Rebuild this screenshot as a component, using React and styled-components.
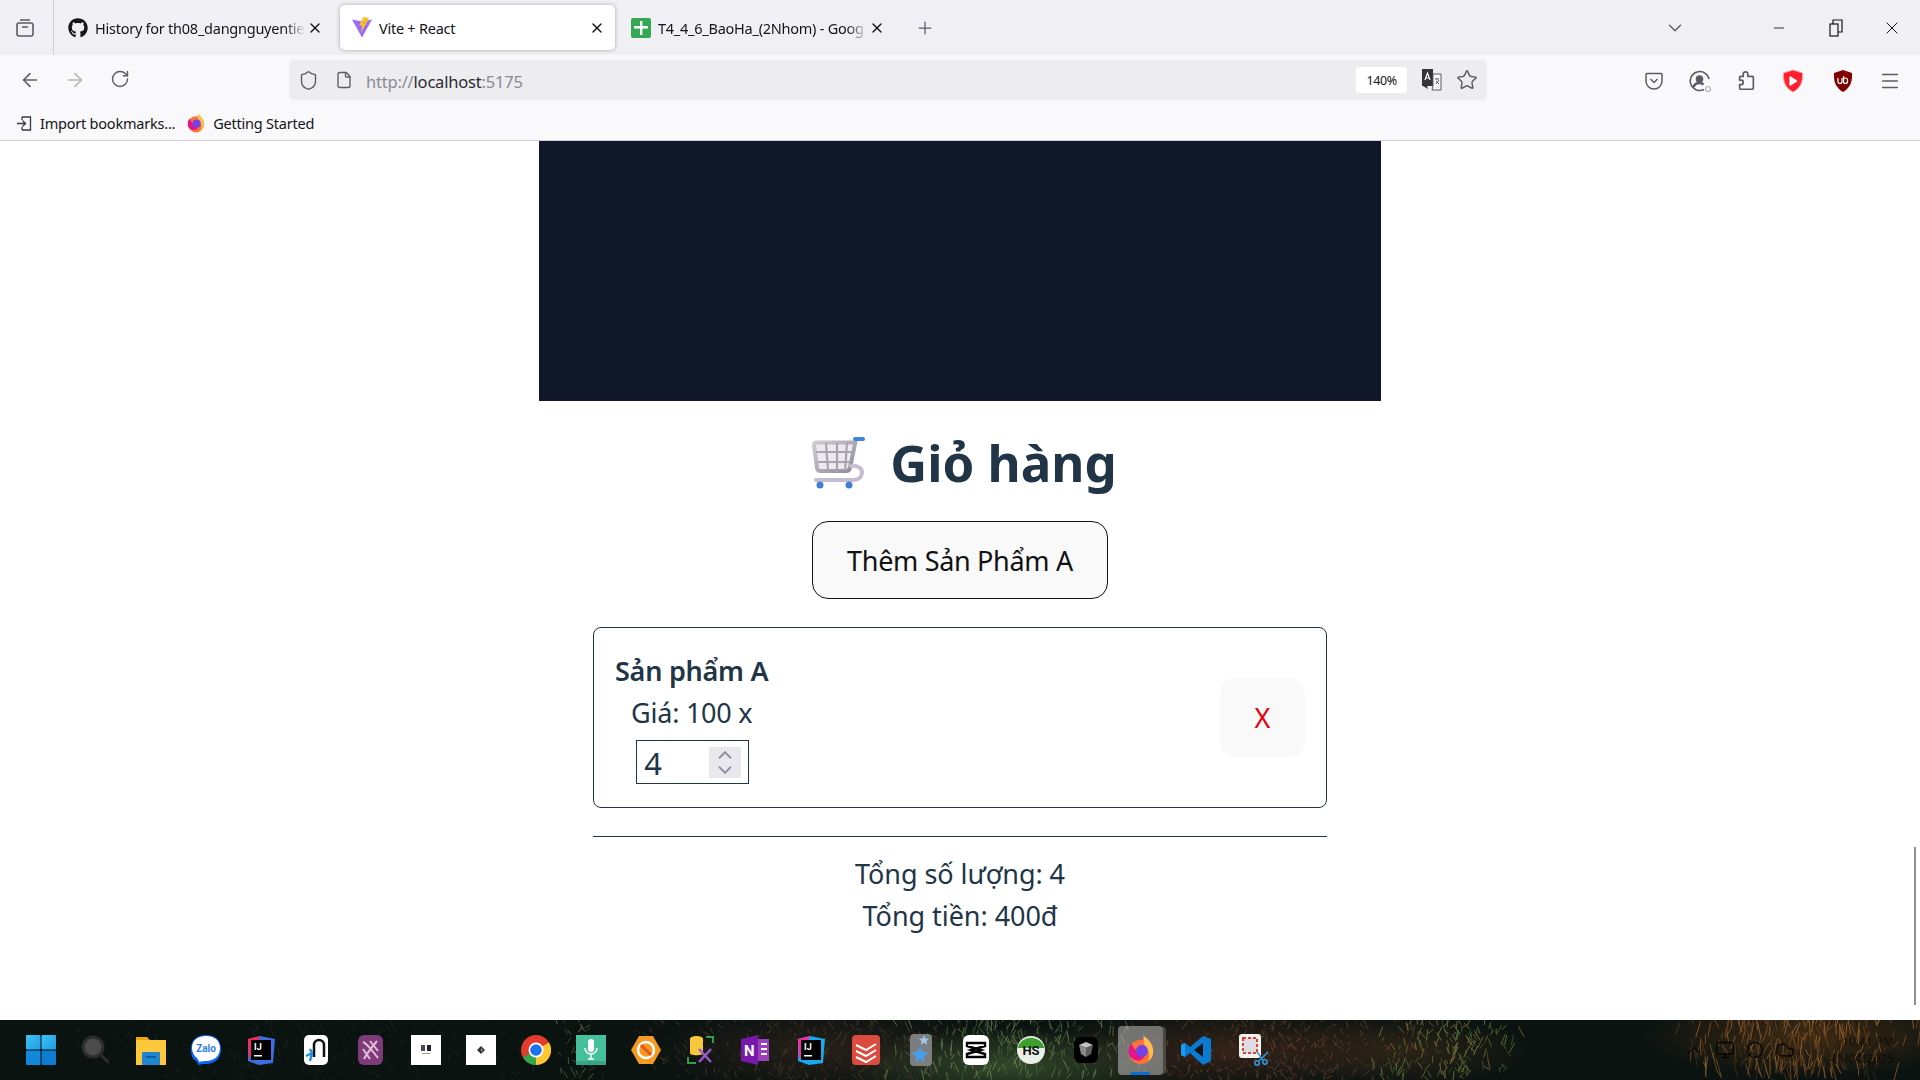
import React from "react";
import styled, { createGlobalStyle } from "styled-components";
import { ArrowLeft, ArrowRight, RotateCw, Shield, File, Star, Menu, ChevronDown, ChevronUp, Minus, X, Plus, Monitor, Circle, Cloud } from "lucide-react";
import { FaGithub } from "react-icons/fa";

const UI_FONT = `"Noto Sans", "Open Sans", sans-serif`;

const GlobalStyle = createGlobalStyle`
  html, body {
    margin: 0;
    padding: 0;
    overflow: hidden;
    background: #fff;
  }
  * {
    box-sizing: border-box;
  }
`;

const Screen = styled.div`
  width: 1920px;
  height: 1080px;
  display: flex;
  flex-direction: column;
  font-family: ${UI_FONT};
  overflow: hidden;
`;

const TabStrip = styled.div`
  height: 55px;
  flex: none;
  display: flex;
  align-items: center;
  background: #f0f0f4;
  color: #15141a;
`;

const SideButton = styled.div`
  width: 54px;
  height: 55px;
  flex: none;
  display: flex;
  align-items: center;
  justify-content: center;
  padding-right: 4px;
  border-right: 1px solid #d0d0d6;
`;

const Tab = styled.div`
  width: ${p => p.$width}px;
  margin-left: ${p => p.$left || 0}px;
  height: 45px;
  flex: none;
  display: flex;
  align-items: center;
  gap: 7px;
  padding: 0 ${p => p.$right || 10}px 0 12px;
  border-radius: 5px;
  font-size: 14.5px;
  letter-spacing: -0.25px;
  background: ${p => (p.$active ? "#fff" : "transparent")};
  box-shadow: ${p => (p.$active ? "0 0 4px rgba(0,0,0,.3)" : "none")};
`;

const TabTitle = styled.span`
  flex: 1;
  min-width: 0;
  padding-top: 1px;
  margin-right: ${p => (p.$fade ? -6 : 0)}px;
  white-space: nowrap;
  mask-image: ${p => (p.$fade ? "linear-gradient(to right, #000 90%, transparent)" : "none")};
`;

const StripSpacer = styled.div`
  flex: ${p => (p.$width ? "none" : 1)};
  width: ${p => p.$width || 0}px;
`;

const StripButton = styled.div`
  width: ${p => p.$width || 56}px;
  height: 55px;
  flex: none;
  display: flex;
  align-items: center;
  justify-content: center;
  color: ${p => p.$color || "#15141a"};
`;

const NavBar = styled.div`
  height: 50px;
  flex: none;
  display: flex;
  align-items: center;
  background: #f9f9fb;
  color: #5b5b66;
`;

const NavButton = styled.div`
  width: ${p => p.$width || 45}px;
  flex: none;
  display: flex;
  justify-content: center;
  color: ${p => p.$color || "#5b5b66"};
`;

const NavGroup = styled.div`
  width: 289px;
  flex: none;
  display: flex;
  padding-left: 7px;
`;

const UrlBar = styled.div`
  width: 1198px;
  height: 40px;
  flex: none;
  display: flex;
  align-items: center;
  background: #ededf0;
  border-radius: 5px;
  padding-left: 9px;
  color: #5b5b66;
`;

const PageGlyph = styled.div`
  display: flex;
  margin-left: 16px;
`;

const UrlText = styled.div`
  flex: 1;
  margin-left: 13px;
  padding-top: 2px;
  font-size: 16.5px;
  letter-spacing: -0.2px;
  color: #8a8a93;
`;

const UrlHost = styled.span`
  color: #2b2a33;
`;

const ZoomBadge = styled.div`
  width: 51px;
  height: 26px;
  flex: none;
  display: flex;
  align-items: center;
  justify-content: center;
  background: #fff;
  border-radius: 4px;
  font-size: 12.5px;
  letter-spacing: -0.4px;
  color: #15141a;
`;

const UrlIcons = styled.div`
  width: 80px;
  flex: none;
  display: flex;
  align-items: center;
  gap: 14px;
  padding-left: 14px;
`;

const NavTools = styled.div`
  flex: 1;
  display: flex;
  align-items: center;
  padding: 1px 0 0 144px;
  gap: 1px;
`;

const BookmarkBar = styled.div`
  height: 36px;
  flex: none;
  display: flex;
  align-items: center;
  gap: 11px;
  padding: 1px 0 0 16px;
  background: #f9f9fb;
  border-bottom: 1px solid #cfcfd8;
  font-size: 14.5px;
  letter-spacing: -0.22px;
  color: #15141a;
`;

const Bookmark = styled.div`
  display: flex;
  align-items: center;
  gap: 7px;
`;

const Page = styled.main`
  position: relative;
  flex: 1;
  min-height: 0;
  display: flex;
  flex-direction: column;
  align-items: center;
  background: #fff;
  color: #213547;
  overflow: hidden;
`;

const Hero = styled.div`
  width: 842px;
  height: 260px;
  flex: none;
  background: #0f1729;
`;

const Title = styled.h1`
  margin: 28px 0 0;
  padding-left: 9px;
  display: flex;
  align-items: center;
  gap: 20px;
  height: 66px;
  font-size: 51px;
  font-weight: 700;
  letter-spacing: 0;
  color: #213547;
`;

const AddButton = styled.button`
  width: 296px;
  height: 78px;
  margin-top: 26px;
  border: 1px solid #111;
  border-radius: 16px;
  background: #f9f9f9;
  font-family: ${UI_FONT};
  font-size: 27px;
  letter-spacing: -0.32px;
  color: #111;
`;

const Card = styled.section`
  width: 734px;
  height: 181px;
  margin-top: 28px;
  padding: 0 21px;
  display: flex;
  align-items: center;
  justify-content: space-between;
  border: 1px solid #213547;
  border-radius: 8px;
`;

const ItemInfo = styled.div`
  display: flex;
  flex-direction: column;
  align-items: center;
`;

const ItemName = styled.div`
  font-size: 27px;
  font-weight: 600;
  letter-spacing: -0.25px;
  line-height: 40px;
`;

const ItemPrice = styled.div`
  font-size: 27px;
  letter-spacing: -0.25px;
  line-height: 44px;
`;

const QtyBox = styled.div`
  width: 113px;
  height: 44px;
  margin: 5px 0 0 2px;
  padding: 0 7px 0 7px;
  display: flex;
  align-items: center;
  justify-content: space-between;
  border: 1px solid #213547;
  font-size: 31px;
`;

const QtyValue = styled.span`
  padding-top: 2px;
`;

const Spinner = styled.div`
  width: 32px;
  height: 31px;
  display: flex;
  flex-direction: column;
  align-items: center;
  justify-content: center;
  background: #e9e9ed;
  color: #8f8f9d;

  svg {
    margin: -3.5px 0;
  }
`;

const RemoveButton = styled.button`
  width: 85px;
  height: 79px;
  border: none;
  border-radius: 16px;
  background: #f9f9f9;
  font-family: ${UI_FONT};
  font-size: 27px;
  color: #e8000d;
`;

const Divider = styled.hr`
  width: 734px;
  height: 1px;
  margin: 28px 0 0;
  border: none;
  background: #213547;
`;

const Summary = styled.div`
  margin-top: 16px;
  font-size: 27px;
  letter-spacing: -0.05px;
  line-height: 42px;
  text-align: center;
`;

const ScrollThumb = styled.div`
  position: absolute;
  right: 4px;
  top: 706px;
  width: 2px;
  height: 158px;
  background: #8f8f8f;
`;

const Taskbar = styled.footer`
  position: relative;
  height: 60px;
  flex: none;
  display: flex;
  align-items: center;
  padding-left: 13px;
  background:
    radial-gradient(ellipse 170px 40px at 1010px 46px, rgba(60,84,48,.8), transparent),
    radial-gradient(ellipse 190px 40px at 1230px 30px, rgba(58,36,26,.9), transparent),
    radial-gradient(ellipse 170px 40px at 820px 30px, rgba(46,34,26,.8), transparent),
    radial-gradient(ellipse 130px 36px at 1400px 30px, rgba(52,40,24,.8), transparent),
    radial-gradient(ellipse 170px 40px at 1810px 16px, rgba(74,46,20,.8), transparent),
    #0b1311;
`;

const Wallpaper = styled.svg`
  position: absolute;
  inset: 0;
  width: 1920px;
  height: 60px;
  filter: blur(0.7px);
  opacity: 0.6;
`;

const Slot = styled.div`
  position: relative;
  width: 55px;
  height: 60px;
  flex: none;
  display: flex;
  align-items: center;
  justify-content: center;
  padding-left: ${p => p.$shift || 0}px;
`;

const ActiveSlot = styled(Slot)`
  &::before {
    content: "";
    position: absolute;
    top: 6px;
    left: 5px;
    width: 45px;
    height: 49px;
    border-radius: 4px;
    background: rgba(190,190,190,.55);
    box-shadow: 4px 0 0 -1px rgba(150,150,150,.35);
  }
  &::after {
    content: "";
    position: absolute;
    bottom: 5px;
    left: 17px;
    width: 20px;
    height: 3px;
    border-radius: 2px;
    background: #0a6fd0;
  }
  svg {
    position: relative;
  }
`;

const Tray = styled.div`
  position: relative;
  margin-left: auto;
  display: flex;
  align-items: center;
  gap: 11px;
  padding-right: 26px;
  color: rgba(0,0,0,.75);
`;

const TrayClock = styled.div`
  width: 76px;
  margin-left: 12px;
  font-size: 12px;
  line-height: 17px;
  text-align: right;
  color: rgba(0,0,0,.6);
`;

// grass blades over the wallpaper, seeded so every load draws the same picture
const grassPatches = [
  { from: 0, to: 640, count: 160, colors: ["#1d2b26", "#17231f", "#243430"], length: 6 },
  { from: 555, to: 600, count: 40, colors: ["#6b7a48", "#8a9460", "#4d5c38"], length: 6 },
  { from: 620, to: 1000, count: 300, colors: ["#4a3527", "#5e4430", "#2f3a2a", "#6b4a34"], length: 5 },
  { from: 880, to: 1150, count: 300, colors: ["#4d7040", "#6f8f55", "#33502e", "#8aa56a"], length: 8 },
  { from: 1110, to: 1440, count: 320, colors: ["#5c3a2a", "#744a34", "#3d2a20", "#875a3e"], length: 5 },
  { from: 1370, to: 1530, count: 170, colors: ["#6d8f45", "#8fa85a", "#a88a3e", "#4f6e35"], length: 8 },
  { from: 1660, to: 1930, count: 280, colors: ["#a8642a", "#7a4a20", "#c47c34", "#4a3a1c"], length: 15 },
];

const buildBlades = () => {
  let seed = 71;
  const next = () => {
    seed = (seed * 16807) % 2147483647;
    return seed / 2147483647;
  };
  const blades = [];
  grassPatches.forEach(patch => {
    for (let i = 0; i < patch.count; i++) {
      const x = patch.from + ((next() + next()) / 2) * (patch.to - patch.from);
      const y = next() * 62;
      blades.push({
        x,
        y,
        dx: (next() - 0.5) * 12,
        dy: patch.length * (0.4 + next()),
        color: patch.colors[Math.floor(next() * patch.colors.length)],
      });
    }
  });
  return blades;
};

const blades = buildBlades();

const SideIcon = () => (
  <svg width="20" height="20" viewBox="0 0 20 20" fill="none" stroke="#5b5b66" strokeWidth="1.6">
    <rect x="2" y="5" width="16" height="13" rx="2" />
    <path d="M5 2h10M7 9h6" />
  </svg>
);

const ViteIcon = () => (
  <svg width="20" height="21" viewBox="0 0 20 21">
    <path d="M0 2.500 10 4.500l10-2L10 20.500z" fill="#9a6bff" />
    <path d="M11 0l6 1-4.500 9z" fill="#fbbf24" />
    <path d="M11 0 7.500 8l2.500 1-1 7 4.500-9-2.500-.5z" fill="#ffc517" />
  </svg>
);

const SheetIcon = () => (
  <svg width="20" height="20" viewBox="0 0 20 20">
    <rect width="20" height="20" rx="2" fill="#34a853" />
    <path d="M9 3h2.400v5H17v2.400h-5.600V17H9v-6.600H3V8h6z" fill="#fff" />
  </svg>
);

const ImportIcon = () => (
  <svg width="17" height="17" viewBox="0 0 17 17" fill="none" stroke="#3a3a44" strokeWidth="1.300">
    <path d="M6 2h8.500v13H6M6 2v3M6 15v-3M1 8.500h8M6.500 5.500l3 3-3 3" />
  </svg>
);

const FirefoxIcon = ({ size = 20 }) => (
  <svg width={size} height={size} viewBox="0 0 32 32">
    <circle cx="16" cy="18" r="13" fill="#ff7139" />
    <path d="M6 9c2 7 8 10 13 9 3 4-2 11-8 9-5-1-9-5-8-11 0-3 1-5 3-7z" fill="#e31587" />
    <path d="M19 1c4 3 10 8 10 16 0 5-2 9-6 11 3-5 2-11-2-15-2-3-3-7-2-12z" fill="#ffbd4f" />
    <circle cx="17" cy="17" r="6.500" fill="#7542e5" />
  </svg>
);

const TranslateIcon = () => (
  <svg width="21" height="24" viewBox="0 0 21 24">
    <path d="M1 1h11v17H6l1 3-5-3H1z" fill="#33333b" />
    <path d="M12 6h8v16h-9l1-4z" fill="#f9f9fb" stroke="#5b5b66" />
    <path d="M4 12l2.500-7L9 12M5 10h3" stroke="#fff" fill="none" strokeWidth="1.200" />
    <path d="M14 11h4M16 10v1M15 16l3-4M15 13l3 3" stroke="#5b5b66" fill="none" />
  </svg>
);

const PocketIcon = () => (
  <svg width="20" height="20" viewBox="0 0 20 20" fill="none" stroke="#5b5b66" strokeWidth="1.500">
    <path d="M3 2.500h14a1 1 0 0 1 1 1V10a8 8 0 0 1-16 0V3.500a1 1 0 0 1 1-1z" />
    <path d="M6.500 8l3.500 3.500L13.500 8" />
  </svg>
);

const ProfileIcon = () => (
  <svg width="24" height="24" viewBox="0 0 24 24" fill="none" stroke="#5b5b66" strokeWidth="1.600">
    <path d="M16 20.500A9.500 9.500 0 1 1 21 10" />
    <circle cx="11.500" cy="10" r="3" fill="#5b5b66" />
    <path d="M5.500 18c1-3 3.500-4 6-4 1.500 0 3 .5 4 1.500" strokeWidth="2.500" />
    <circle cx="20" cy="20" r="2.500" stroke="#b4b4bb" strokeWidth="1.200" />
  </svg>
);

const PuzzleIcon = () => (
  <svg width="22" height="24" viewBox="0 0 24 24" fill="none" stroke="#5b5b66" strokeWidth="1.800" strokeLinejoin="round">
    <path d="M9 7V4.500a2.500 2.500 0 0 1 5 0V7h5a1 1 0 0 1 1 1v12a1 1 0 0 1-1 1H6a1 1 0 0 1-1-1v-4h1.500a2.500 2.500 0 0 0 0-5H5V8a1 1 0 0 1 1-1z" />
  </svg>
);

const RedShield = () => (
  <svg width="22" height="24" viewBox="0 0 22 24">
    <path d="M11 1l9.500 3c.5 9-2 15-9.500 19C3.500 19 1 13 1.500 4z" fill="#ff1f2f" stroke="#ff9a9a" />
    <path d="M8 7.500l7 4.500-7 4.500z" fill="#fff" strokeLinejoin="round" stroke="#fff" />
  </svg>
);

const UBlockIcon = () => (
  <svg width="20" height="24" viewBox="0 0 20 24">
    <path d="M10 1l9 3c.5 9-2 15-9 19C3 19 .5 13 1 4z" fill="#800000" />
    <path d="M5 9v3.500a2 2 0 0 0 4 0V9M10.500 7v5.500a2 2 0 0 0 4 0v-1.500a2 2 0 0 0-4 0" stroke="#fff" strokeWidth="1.200" fill="none" />
  </svg>
);

const RestoreIcon = () => (
  <svg width="14" height="18" viewBox="0 0 14 18" fill="none" stroke="#15141a" strokeWidth="1.200">
    <rect x="1" y="5" width="8" height="12" />
    <path d="M4 5V1h9v12H9" />
  </svg>
);

const CartIcon = () => (
  <svg width="58" height="54" viewBox="0 0 56 54">
    <defs>
      <linearGradient id="cartBody" x1="0" y1="0" x2="1" y2="1">
        <stop offset="0" stopColor="#d2cfd6" />
        <stop offset="1" stopColor="#8f8b97" />
      </linearGradient>
    </defs>
    <path d="M43 4 37 33c-.5 2-2 3-4 3H7c-1.500 0-2.500-1-3-3L1 10c0-1.500 1-2.500 2.500-2.500H41" fill="#ece9ef" stroke="url(#cartBody)" strokeWidth="4" />
    <path d="M3 17h37M5 27h33M13 8l2 28M24 8v28M34 8l-2 28" stroke="#a9a5b0" strokeWidth="2.200" fill="none" />
    <path d="M38 31c6-1 11 2 11 6 0 6-5 8-9 8H3" fill="none" stroke="#c6bdd0" strokeWidth="4" strokeLinecap="round" />
    <path d="M42 4h8" stroke="#3f86d8" strokeWidth="4" strokeLinecap="round" />
    <circle cx="7" cy="50" r="3.500" fill="#3f7fd6" />
    <circle cx="36" cy="50" r="3.500" fill="#3f7fd6" />
  </svg>
);

const WinLogo = () => (
  <svg width="30" height="30" viewBox="0 0 30 30">
    <defs>
      <linearGradient id="winTop" x1="0" y1="0" x2="1" y2="1">
        <stop offset="0" stopColor="#3fc4f5" />
        <stop offset="1" stopColor="#1e9be3" />
      </linearGradient>
    </defs>
    <rect width="14.500" height="14.500" rx="1" fill="url(#winTop)" />
    <rect x="15.500" width="14.500" height="14.500" rx="1" fill="url(#winTop)" />
    <rect y="15.500" width="14.500" height="14.500" rx="1" fill="#1288dc" />
    <rect x="15.500" y="15.500" width="14.500" height="14.500" rx="1" fill="#0d7dd3" />
  </svg>
);

const SearchLogo = () => (
  <svg width="30" height="30" viewBox="0 0 30 30">
    <circle cx="12" cy="12" r="10" fill="#4b4b4b" stroke="#2c2c2c" strokeWidth="3" />
    <path d="M20 20l7 7" stroke="#2c2c2c" strokeWidth="3" strokeLinecap="round" />
  </svg>
);

const FolderLogo = () => (
  <svg width="30" height="30" viewBox="0 0 30 30">
    <path d="M0 2h11l3 3h16v25H0z" fill="#e8a80c" />
    <rect y="5" width="30" height="25" rx="1" fill="#fdc83e" />
    <rect x="6" y="17" width="18" height="13" rx="1" fill="#1e86d0" />
    <rect x="10" y="21" width="10" height="2" fill="#0f5fa0" />
  </svg>
);

const ZaloLogo = () => (
  <svg width="30" height="30" viewBox="0 0 30 30">
    <path d="M15 0c9 0 15 5 15 14 0 10-7 15-15 15-3 0-5 0-8 1 0-2-1-3-2-4C1 24 0 19 0 14 0 5 6 0 15 0z" fill="#0a68ff" />
    <path d="M15 1c8 0 14 4 14 12s-6 13-14 13c-2 0-4 0-7 1 0-2-1-2-2-4C3 21 1 17 1 13 1 5 7 1 15 1z" fill="#fff" />
    <text x="15" y="17" textAnchor="middle" fontSize="10" fontWeight="700" fill="#2f80ed" fontFamily="Roboto, sans-serif">Zalo</text>
  </svg>
);

const JetBrainsLogo = ({ colors }) => (
  <svg width="30" height="30" viewBox="0 0 30 30">
    <path d="M2 4 14 1l15 3-2 24-14 2-11-4z" fill={colors[0]} />
    <path d="M2 4 14 1 9 14 3 24z" fill={colors[1]} />
    <rect x="5" y="5" width="20" height="20" fill="#000" />
    <text x="8" y="15" fontSize="9" fontWeight="700" fill="#fff" fontFamily="Roboto, sans-serif">IJ</text>
    <rect x="8" y="20" width="8" height="1.500" fill="#fff" />
  </svg>
);

const NodeLogo = () => (
  <svg width="24" height="30" viewBox="0 0 24 30">
    <rect width="24" height="30" rx="5" fill="#fff" />
    <path d="M10 22V10a5 5 0 0 1 10 0v12" fill="none" stroke="#111" strokeWidth="2.500" />
    <path d="M2 21l6-3M6 14l2 4M6 26l2-8" stroke="#1e90e8" strokeWidth="2.500" />
  </svg>
);

const ZedLogo = () => (
  <svg width="25" height="30" viewBox="0 0 25 30">
    <rect width="25" height="30" rx="6" fill="#7d3c78" />
    <path d="M5 7c5 2 10 10 15 16M5 14l7 10M12 6l8 10M19 6C14 12 9 18 6 24" stroke="#e3bcd9" strokeWidth="2" fill="none" />
  </svg>
);

const PortraitTile = () => (
  <svg width="30" height="30" viewBox="0 0 30 30">
    <rect width="30" height="30" fill="#fff" />
    <rect x="10" y="10" width="4" height="6" fill="#4a4a55" />
    <rect x="16" y="10" width="4" height="6" fill="#22222c" />
    <rect x="11" y="18" width="8" height="1" fill="#999" />
  </svg>
);

const DiamondTile = () => (
  <svg width="30" height="30" viewBox="0 0 30 30">
    <rect width="30" height="30" fill="#fff" />
    <path d="M15 11l4 4-4 4-4-4z" fill="#333" />
    <path d="M15 13l2 2-2 2z" fill="#999" />
  </svg>
);

const ChromeLogo = () => (
  <svg width="30" height="30" viewBox="0 0 30 30">
    <circle cx="15" cy="15" r="15" fill="#e33b2e" />
    <path d="M15 15 2 22.500A15 15 0 0 0 15 30z" fill="#2fa84f" />
    <path d="M15 15l0 15A15 15 0 0 0 28 7.500z" fill="#fcc934" />
    <circle cx="15" cy="15" r="7.500" fill="#fff" />
    <circle cx="15" cy="15" r="5.800" fill="#1a73e8" />
  </svg>
);

const MicLogo = () => (
  <svg width="30" height="30" viewBox="0 0 30 30">
    <rect width="30" height="30" fill="#45c09a" />
    <rect y="26" width="30" height="4" fill="#36a384" />
    <rect x="12" y="4" width="6" height="13" rx="3" fill="#fff" />
    <path d="M9 13a6 6 0 0 0 12 0M15 19v5M12 24h6" stroke="#fff" strokeWidth="1.500" fill="none" />
  </svg>
);

const OrangeLogo = () => (
  <svg width="30" height="30" viewBox="0 0 30 30">
    <path d="M8 1h14l8 14-8 14H8L0 15z" fill="#f59a23" />
    <circle cx="15" cy="15" r="8" fill="none" stroke="#fff" strokeWidth="2.500" />
    <path d="M10 10l10 10" stroke="#e8531f" strokeWidth="3" />
  </svg>
);

const DbToolLogo = () => (
  <svg width="30" height="30" viewBox="0 0 30 30">
    <path d="M4 4c0-4 13-4 13 0v14c0 3-13 3-13 0z" fill="#f6c83d" />
    <path d="M20 2h7v6M2 22v6h8" stroke="#2ea043" strokeWidth="2" fill="none" />
    <path d="M13 14l12 13M25 14 13 27" stroke="#9b59d0" strokeWidth="2.500" />
  </svg>
);

const OneNoteLogo = () => (
  <svg width="30" height="30" viewBox="0 0 30 30">
    <rect x="12" y="4" width="16" height="22" fill="#9b3fbf" />
    <path d="M0 4 17 0v30L0 26z" fill="#7719aa" />
    <text x="3" y="21" fontSize="15" fontWeight="700" fill="#fff" fontFamily="Roboto, sans-serif">N</text>
    <path d="M20 9h6M20 14h6M20 19h6" stroke="#fff" strokeWidth="2" />
  </svg>
);

const TodoistLogo = () => (
  <svg width="28" height="30" viewBox="0 0 28 30">
    <rect width="28" height="30" rx="4" fill="#db4c3f" />
    <path d="M4 10l10 5 10-6M4 16l10 5 10-6M4 22l10 5 10-6" stroke="#fff" strokeWidth="2" fill="none" />
  </svg>
);

const StarsLogo = () => (
  <svg width="22" height="32" viewBox="0 0 22 32">
    <rect width="22" height="32" rx="4" fill="#7d7d7d" />
    <path d="M14 1l1.500 3.500 3.500.3-2.700 2.400.8 3.600-3.100-2-3.100 2 .8-3.600-2.700-2.400 3.500-.3z" fill="#9cc6ee" />
    <path d="M10 12l2.600 5.400 5.900.8-4.300 4.100 1 5.900-5.200-2.800-5.200 2.800 1-5.900-4.300-4.100 5.900-.8z" fill="#4a9be8" />
  </svg>
);

const CapcutLogo = () => (
  <svg width="26" height="30" viewBox="0 0 26 30">
    <rect width="26" height="30" rx="6" fill="#fff" />
    <path d="M4 8h18v3L8 15l14 4v3H4v-3l14-4-14-4z" fill="none" stroke="#000" strokeWidth="2.400" />
  </svg>
);

const HsLogo = () => (
  <svg width="28" height="30" viewBox="0 0 28 30">
    <circle cx="14" cy="15" r="14" fill="#e9eee6" />
    <path d="M.5 13a14 14 0 0 1 27 0z" fill="#3fa02d" />
    <text x="14" y="20" textAnchor="middle" fontSize="13" fontWeight="700" fill="#111" fontFamily="Roboto, sans-serif">HS</text>
  </svg>
);

const BoxLogo = () => (
  <svg width="24" height="26" viewBox="0 0 24 26">
    <rect width="24" height="26" rx="6" fill="#000" />
    <path d="M5 8l7-3 7 3-7 3z" fill="#c2c2c2" />
    <path d="M5 8l7 3v9l-5-3z" fill="#8a8a8a" />
    <path d="M19 8l-7 3v9l5-3z" fill="#5e5e5e" />
  </svg>
);

const VsCodeLogo = () => (
  <svg width="30" height="30" viewBox="0 0 30 30">
    <path d="M22 1 30 4v22l-8 4L9 18l-5 4-4-2V10l4-2 5 4z" fill="#0a7bd0" />
    <path d="M22 8 13 15l9 7z" fill="#10141a" />
    <path d="M0 10v10l4 2 0-14z" fill="#1a9df0" />
  </svg>
);

const SnipLogo = () => (
  <svg width="30" height="32" viewBox="0 0 30 32">
    <rect width="22" height="24" rx="3" fill="#f1f1f1" />
    <rect x="4" y="4" width="14" height="15" fill="#dcdce4" stroke="#d9432f" strokeWidth="2" strokeDasharray="3 2" />
    <path d="M18 18l6 8M29 18l-9 9" stroke="#2f9be0" strokeWidth="1.500" />
    <circle cx="18" cy="29" r="2.200" fill="none" stroke="#2f9be0" strokeWidth="1.500" />
    <circle cx="26" cy="28" r="2.200" fill="none" stroke="#2f9be0" strokeWidth="1.500" />
  </svg>
);

const apps = [
  <WinLogo />, <SearchLogo />, <FolderLogo />, <ZaloLogo />,
  <JetBrainsLogo colors={["#3b6fe0", "#fe2857"]} />, <NodeLogo />, <ZedLogo />,
  <PortraitTile />, <DiamondTile />, <ChromeLogo />, <MicLogo />, <OrangeLogo />,
  <DbToolLogo />, <OneNoteLogo />, <JetBrainsLogo colors={["#18a8f0", "#f92a9e"]} />, <TodoistLogo />,
  <StarsLogo />, <CapcutLogo />, <HsLogo />, <BoxLogo />,
];

export default function App() {
  return (
    <Screen>
      <GlobalStyle />
      <TabStrip>
        <SideButton><SideIcon /></SideButton>
        <Tab $width={273} $left={2} $right={6}>
          <FaGithub size={20} />
          <TabTitle $fade>History for th08_dangnguyentie</TabTitle>
          <X size={16} />
        </Tab>
        <Tab $width={275} $left={11} $active>
          <ViteIcon />
          <TabTitle>Vite + React</TabTitle>
          <X size={16} />
        </Tab>
        <Tab $width={284} $left={4} $right={18}>
          <SheetIcon />
          <TabTitle $fade>T4_4_6_BaoHa_(2Nhom) - Goog</TabTitle>
          <X size={16} />
        </Tab>
        <StripButton $width={44} $color="#5b5b66"><Plus size={20} strokeWidth={1.5} /></StripButton>
        <StripSpacer />
        <StripButton $color="#5b5b66"><ChevronDown size={22} strokeWidth={1.5} /></StripButton>
        <StripSpacer $width={48} />
        <StripButton><Minus size={16} strokeWidth={1.3} /></StripButton>
        <StripButton $width={57}><RestoreIcon /></StripButton>
        <StripButton><X size={20} strokeWidth={1.2} /></StripButton>
      </TabStrip>

      <NavBar>
        <NavGroup>
          <NavButton><ArrowLeft size={22} strokeWidth={1.7} /></NavButton>
          <NavButton $color="#b4b4bb"><ArrowRight size={22} strokeWidth={1.7} /></NavButton>
          <NavButton><RotateCw size={20} strokeWidth={1.7} /></NavButton>
        </NavGroup>
        <UrlBar>
          <Shield size={21} strokeWidth={1.6} />
          <PageGlyph><File size={18} strokeWidth={1.8} /></PageGlyph>
          <UrlText>http://<UrlHost>localhost</UrlHost>:5175</UrlText>
          <ZoomBadge>140%</ZoomBadge>
          <UrlIcons>
            <TranslateIcon />
            <Star size={22} strokeWidth={1.6} />
          </UrlIcons>
        </UrlBar>
        <NavTools>
          <NavButton><PocketIcon /></NavButton>
          <NavButton><ProfileIcon /></NavButton>
          <NavButton><PuzzleIcon /></NavButton>
          <NavButton $width={48}><RedShield /></NavButton>
          <NavButton $width={50}><UBlockIcon /></NavButton>
          <NavButton $width={41}><Menu size={22} strokeWidth={1.6} /></NavButton>
        </NavTools>
      </NavBar>

      <BookmarkBar>
        <Bookmark><ImportIcon />Import bookmarks...</Bookmark>
        <Bookmark><FirefoxIcon />Getting Started</Bookmark>
      </BookmarkBar>

      <Page>
        <Hero />
        <Title><CartIcon />Giỏ hàng</Title>
        <AddButton>Thêm Sản Phẩm A</AddButton>
        <Card>
          <ItemInfo>
            <ItemName>Sản phẩm A</ItemName>
            <ItemPrice>Giá: 100 x</ItemPrice>
            <QtyBox>
              <QtyValue>4</QtyValue>
              <Spinner>
                <ChevronUp size={22} strokeWidth={2} />
                <ChevronDown size={22} strokeWidth={2} />
              </Spinner>
            </QtyBox>
          </ItemInfo>
          <RemoveButton>X</RemoveButton>
        </Card>
        <Divider />
        <Summary>
          <div>Tổng số lượng: 4</div>
          <div>Tổng tiền: 400đ</div>
        </Summary>
        <ScrollThumb />
      </Page>

      <Taskbar>
        <Wallpaper viewBox="0 0 1920 60">
          {blades.map((b, i) => (
            <line key={i} x1={b.x} y1={b.y} x2={b.x + b.dx} y2={b.y - b.dy} stroke={b.color} strokeWidth="1" />
          ))}
        </Wallpaper>
        {apps.map((app, i) => <Slot key={i}>{app}</Slot>)}
        <ActiveSlot><FirefoxIcon size={30} /></ActiveSlot>
        <Slot><VsCodeLogo /></Slot>
        <Slot $shift={6}><SnipLogo /></Slot>
        <Tray>
          <ChevronUp size={20} />
          <Monitor size={20} />
          <Circle size={18} />
          <Cloud size={20} />
          <TrayClock>
            <div>10:41 PM</div>
            <div>15/04/2025</div>
          </TrayClock>
        </Tray>
      </Taskbar>
    </Screen>
  );
}
